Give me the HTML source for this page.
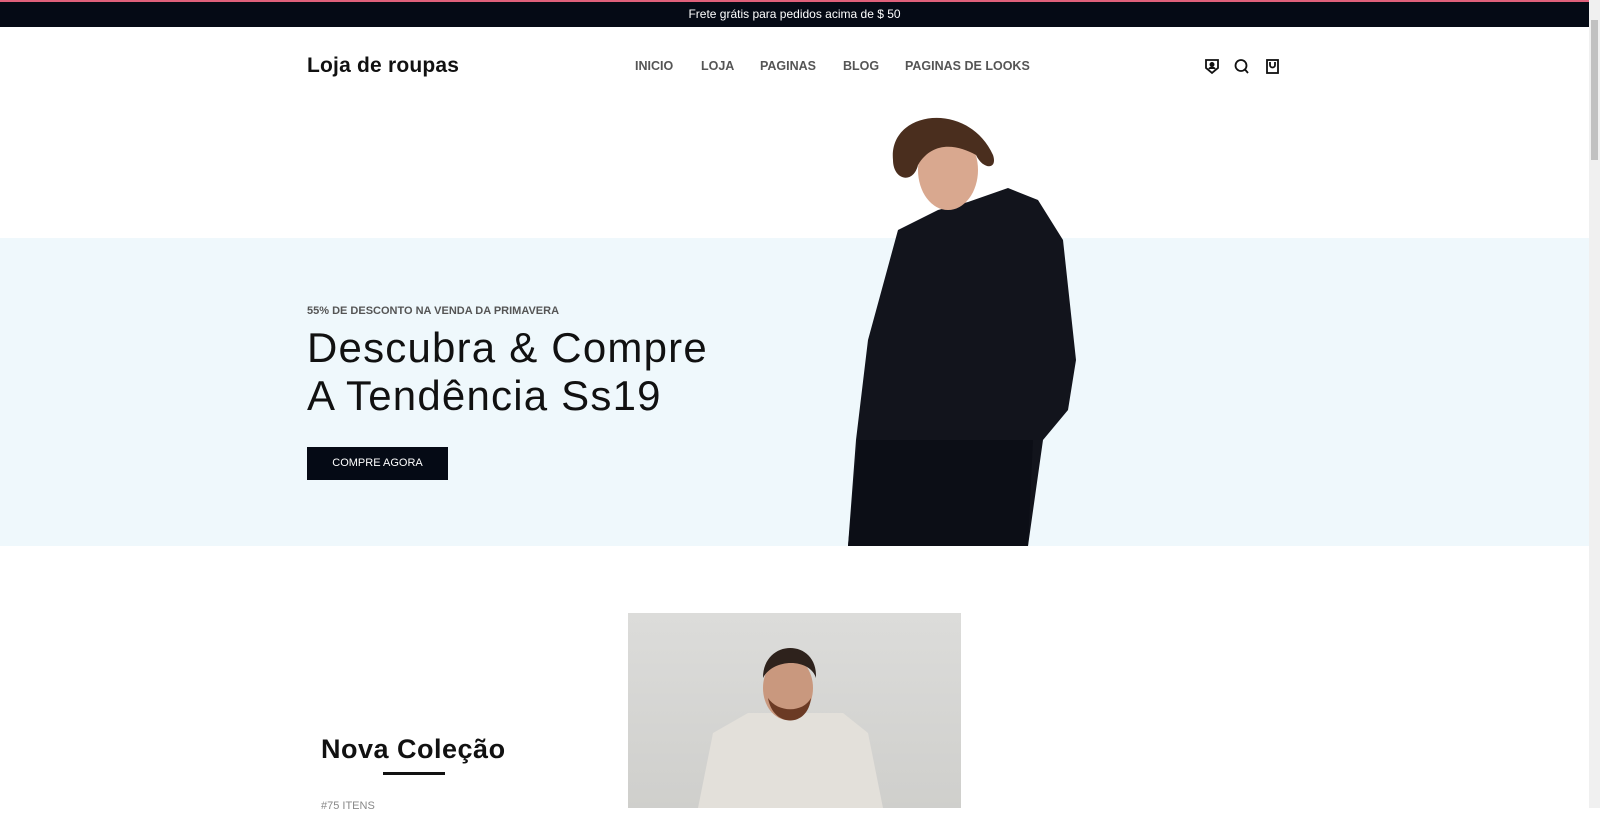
<!DOCTYPE html>
<html><head><meta charset="utf-8"><style>
*{margin:0;padding:0;box-sizing:border-box}
body{width:1600px;height:808px;overflow:hidden;background:#fff;font-family:"Liberation Sans",sans-serif;position:relative}
.top{position:absolute;left:0;top:0;width:1589px;height:27px;background:#050a15;border-top:2px solid #e0607a;color:#fff;font-size:12px;text-align:center;line-height:25px}
.logo{position:absolute;left:307px;top:54px;font-size:21px;font-weight:bold;color:#111;letter-spacing:.2px}
.nav{position:absolute;top:59px;font-size:12.5px;font-weight:bold;color:#555}
.band{position:absolute;left:0;top:238px;width:1589px;height:308px;background:#eff8fc}
.sub{position:absolute;left:307px;top:305px;font-size:11px;font-weight:bold;color:#555}
.h1{position:absolute;left:307px;top:324px;font-size:42px;line-height:48px;color:#111;letter-spacing:1.2px}
.btn{position:absolute;left:307px;top:447px;width:141px;height:33px;background:#050a15;color:#fff;font-size:11px;text-align:center;line-height:33px}
.nc{position:absolute;left:321px;top:734px;font-size:27px;font-weight:bold;color:#111;letter-spacing:.5px}
.ul{position:absolute;left:383px;top:772px;width:62px;height:3px;background:#111}
.it{position:absolute;left:321px;top:800px;font-size:11px;color:#888}
.photo{position:absolute;left:628px;top:613px;width:333px;height:195px;background:linear-gradient(#dcdcda,#cfcfcc)}
.sb{position:absolute;left:1589px;top:0;width:11px;height:808px;background:#f0f0f0}
.sb div{position:absolute;left:2px;top:20px;width:7px;height:140px;background:#c1c1c1}
</style></head><body>
<div class="top">Frete grátis para pedidos acima de $ 50</div>
<div class="logo">Loja de roupas</div>
<div class="nav" style="left:635px">INICIO</div>
<div class="nav" style="left:701px">LOJA</div>
<div class="nav" style="left:760px">PAGINAS</div>
<div class="nav" style="left:843px">BLOG</div>
<div class="nav" style="left:905px">PAGINAS DE LOOKS</div>
<svg style="position:absolute;left:1204px;top:58px" width="78" height="17" viewBox="0 0 78 17" fill="none" stroke="#111" stroke-width="1.8">
<path d="M2 2h12v8l-6 5-6-5z"/><circle cx="8" cy="6.5" r="1.6" fill="#111"/><path d="M5 11c1-2 5-2 6 0" fill="#111"/>
<circle cx="37" cy="7.5" r="5.5"/><path d="M41 11.5l3 3.5"/>
<rect x="63" y="2" width="11" height="13"/><path d="M66 4v3a2.5 2.5 0 0 0 5 0V4"/>
</svg>
<div class="band"></div>
<svg style="position:absolute;left:848px;top:110px" width="265" height="436" viewBox="0 0 265 436">
<path d="M50 120 L90 100 L120 92 L160 78 L190 90 L215 130 L228 250 L220 300 L195 330 L180 436 L0 436 L8 330 L20 230 Z" fill="#12141c"/>
<path d="M10 330 L0 436 L180 436 L185 330 Z" fill="#0c0e16"/>
<ellipse cx="100" cy="60" rx="30" ry="40" fill="#d9a88f"/>
<path d="M45 50 C40 0 120 -10 145 45 C150 60 135 60 128 45 C110 35 85 30 70 55 C65 75 45 70 45 50Z" fill="#4a2e1e"/>
</svg>
<div class="sub">55% DE DESCONTO NA VENDA DA PRIMAVERA</div>
<div class="h1">Descubra &amp; Compre<br>A Tendência Ss19</div>
<div class="btn">COMPRE AGORA</div>
<div class="nc">Nova Coleção</div>
<div class="ul"></div>
<div class="it">#75 ITENS</div>
<div class="photo">
<svg width="333" height="195" viewBox="0 0 333 195">
<path d="M70 195 L85 120 L120 100 L215 100 L240 120 L255 195Z" fill="#e3e0da"/>
<ellipse cx="160" cy="75" rx="25" ry="32" fill="#c9987e"/>
<path d="M135 65 C135 25 190 25 188 65 C182 45 145 45 135 65Z" fill="#2e221c"/>
<path d="M140 85 C145 115 180 115 183 85 C175 100 150 100 140 85Z" fill="#6b3a24"/>
</svg></div>
<div class="sb"><div></div></div>
</body></html>
